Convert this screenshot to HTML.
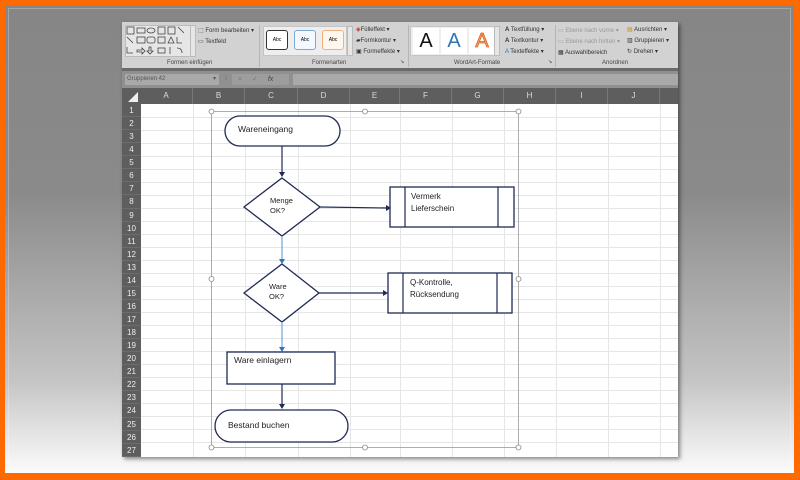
<!DOCTYPE html>
<html><head><meta charset="utf-8"><style>
*{margin:0;padding:0;box-sizing:border-box}
body{width:800px;height:480px;overflow:hidden;position:relative;font-family:"Liberation Sans",sans-serif;background:#ff6a00}
#bg{position:absolute;left:5px;top:5px;width:789px;height:468px;background:linear-gradient(#868686 0%,#8a8a8a 40%,#c4c4c4 80%,#fbfbfb 100%);}
#bg:after{content:"";position:absolute;left:3px;top:3px;right:3px;bottom:3px;border:1px solid rgba(255,255,255,.25)}
#win{position:absolute;left:122px;top:22px;width:556px;height:435px;background:#fff;box-shadow:2px 2px 4px rgba(0,0,0,.45);overflow:hidden}
#ribbon{position:absolute;left:0;top:0;width:556px;height:46px;background:#d2d2d2}
.lbl{position:absolute;top:38px;font-size:6px;color:#444}
.t{position:absolute;font-size:6px;color:#333;white-space:nowrap}
.sep{position:absolute;top:3px;width:1px;height:42px;background:#b5b5b5}
#dk{position:absolute;left:0;top:46px;width:556px;height:3px;background:#6a6a6a}
#fb{position:absolute;left:0;top:49px;width:556px;height:17px;background:#909090}
#hdr{position:absolute;left:0;top:66px;width:556px;height:16px;background:#5e5e5e}
#rh{position:absolute;left:0;top:82px;width:19px;height:353px;background:#5e5e5e}
.ch{position:absolute;top:66px;height:16px;line-height:16px;text-align:center;color:#ddd;font-size:8px;border-right:1px solid #777}
.rn{width:19px;height:13.07px;text-align:center;color:#eee;font-size:8px;line-height:13px;border-bottom:1px solid #6c6c6c}
</style></head><body>
<div id="bg"></div>
<div id="win">
 <div id="ribbon">
  <div style="position:absolute;left:3px;top:3px;width:66px;height:32px;background:#e6e6e6;border:1px solid #bbb"></div>
  <svg style="position:absolute;left:4px;top:4px" width="64" height="30" fill="none" stroke="#444" stroke-width=".8">
   <rect x="1" y="1" width="7" height="7"/><rect x="11" y="2" width="8" height="5"/><ellipse cx="25" cy="4.5" rx="4" ry="2.5"/><rect x="32" y="1" width="7" height="7"/><rect x="42" y="1" width="7" height="7"/><path d="M52 1l6 6"/>
   <path d="M1 11l6 6"/><rect x="11" y="11" width="8" height="6"/><rect x="21" y="11" width="8" height="6" rx="2"/><rect x="32" y="11" width="7" height="6"/><path d="M42 17l3-6 3 6z"/><path d="M51 11v6h5"/>
   <path d="M1 21v6h6"/><path d="M11 24h5v-2l3 3-3 3v-2h-5z"/><path d="M23 21v4h-2l3 3 3-3h-2v-4z"/><rect x="32" y="22" width="7" height="5"/><path d="M44 21v7"/><path d="M51 22q5 0 5 5"/>
  </svg>
  <div style="position:absolute;left:68px;top:3px;width:6px;height:32px;background:#e6e6e6;border:1px solid #bbb"></div>
  <div class="t" style="left:76px;top:5px">⬚ Form bearbeiten ▾</div>
  <div class="t" style="left:76px;top:16px">▭ Textfeld</div>
  <div class="lbl" style="left:45px">Formen einfügen</div>
  <div class="sep" style="left:137px"></div>
  <div style="position:absolute;left:141px;top:4px;width:84px;height:30px;background:#eee;border:1px solid #c5c5c5"></div>
  <div style="position:absolute;left:144px;top:8px;width:22px;height:20px;border:1.3px solid #333;border-radius:3px;background:#fff;font-size:5px;text-align:center;line-height:18px">Abc</div>
  <div style="position:absolute;left:172px;top:8px;width:22px;height:20px;border:1px solid #7aa9d1;border-radius:3px;background:#f4f9ff;font-size:5px;text-align:center;line-height:18px">Abc</div>
  <div style="position:absolute;left:200px;top:8px;width:22px;height:20px;border:1px solid #f0b080;border-radius:3px;background:#fff6ee;font-size:5px;text-align:center;line-height:18px">Abc</div>
  <div style="position:absolute;left:225px;top:4px;width:6px;height:30px;background:#e6e6e6;border:1px solid #bbb"></div>
  <div class="t" style="left:234px;top:4px"><span style="color:#c55">◆</span>Fülleffekt ▾</div>
  <div class="t" style="left:234px;top:15px"><span style="color:#335">▰</span>Formkontur ▾</div>
  <div class="t" style="left:234px;top:26px">▣ Formeffekte ▾</div>
  <div class="lbl" style="left:190px">Formenarten</div>
  <div class="t" style="left:278px;top:37px;font-size:5px">↘</div>
  <div class="sep" style="left:286px"></div>
  <div style="position:absolute;left:288px;top:4px;width:90px;height:30px;background:#eee;border:1px solid #c5c5c5"></div>
  <div style="position:absolute;left:291px;top:6px;width:26px;height:26px;background:#fff;font-size:20px;text-align:center;line-height:26px;color:#111">A</div>
  <div style="position:absolute;left:319px;top:6px;width:26px;height:26px;background:#fff;font-size:20px;text-align:center;line-height:26px;color:#2e75b6">A</div>
  <div style="position:absolute;left:347px;top:6px;width:26px;height:26px;background:#fff;font-size:20px;text-align:center;line-height:26px;color:#f4a460;-webkit-text-stroke:.8px #e06020">A</div>
  <div style="position:absolute;left:372px;top:4px;width:6px;height:30px;background:#e6e6e6;border:1px solid #bbb"></div>
  <div class="t" style="left:383px;top:4px"><b>A</b> Textfüllung ▾</div>
  <div class="t" style="left:383px;top:15px"><b>A</b> Textkontur ▾</div>
  <div class="t" style="left:383px;top:26px"><span style="color:#2e75b6">A</span> Texteffekte ▾</div>
  <div class="lbl" style="left:332px">WordArt-Formate</div>
  <div class="t" style="left:426px;top:37px;font-size:5px">↘</div>
  <div class="sep" style="left:433px"></div>
  <div class="t" style="left:436px;top:5px;color:#999">▭ Ebene nach vorne ▾</div>
  <div class="t" style="left:436px;top:16px;color:#999">▭ Ebene nach hinten ▾</div>
  <div class="t" style="left:436px;top:27px">▦ Auswahlbereich</div>
  <div class="t" style="left:505px;top:4px"><span style="color:#c80">▤</span> Ausrichten ▾</div>
  <div class="t" style="left:505px;top:15px">▥ Gruppieren ▾</div>
  <div class="t" style="left:505px;top:26px">↻ Drehen ▾</div>
  <div class="lbl" style="left:480px">Anordnen</div>
 </div>
 <div id="dk"></div>
 <div id="fb">
  <div style="position:absolute;left:3px;top:3px;width:94px;height:11px;background:#a9a9a9;font-size:6px;color:#555;line-height:11px;padding-left:2px">Gruppieren 42<span style="position:absolute;right:3px">▾</span></div>
  <div style="position:absolute;left:103px;top:3px;font-size:7px;color:#666">⁝</div>
  <div style="position:absolute;left:110px;top:3px;width:57px;height:11px;background:#9d9d9d;font-size:7px;color:#777;line-height:11px;padding-left:6px;word-spacing:8px">× ✓ <i style="color:#444">fx</i></div>
  <div style="position:absolute;left:171px;top:3px;width:385px;height:11px;background:#a9a9a9"></div>
 </div>
 <div id="hdr"></div>
 <svg style="position:absolute;left:6px;top:70px" width="10" height="10"><path d="M0 10L10 0V10z" fill="#eee"/></svg>
 <div class="ch" style="left:18px;width:53px">A</div>
 <div class="ch" style="left:71px;width:52px">B</div>
 <div class="ch" style="left:123px;width:53px">C</div>
 <div class="ch" style="left:176px;width:52px">D</div>
 <div class="ch" style="left:228px;width:50px">E</div>
 <div class="ch" style="left:278px;width:52px">F</div>
 <div class="ch" style="left:330px;width:52px">G</div>
 <div class="ch" style="left:382px;width:52px">H</div>
 <div class="ch" style="left:434px;width:52px">I</div>
 <div class="ch" style="left:486px;width:52px">J</div>
 <div id="rh"></div>
 <svg style="position:absolute;left:19px;top:82px" width="537" height="353">
  <g stroke="#e6e6e6" stroke-width="1">
   <path d="M52.5 0V353M104.5 0V353M157.5 0V353M209.5 0V353M259.5 0V353M311.5 0V353M363.5 0V353M415.5 0V353M467.5 0V353M519.5 0V353"/>
   <path d="M0 13.5H537M0 26.5H537M0 39.5H537M0 52.5H537M0 65.5H537M0 78.5H537M0 91.5H537M0 104.5H537M0 117.5H537M0 130.5H537M0 143.5H537M0 156.5H537M0 169.5H537M0 182.5H537M0 195.5H537M0 208.5H537M0 221.5H537M0 234.5H537M0 247.5H537M0 260.5H537M0 273.5H537M0 286.5H537M0 299.5H537M0 312.5H537M0 325.5H537M0 338.5H537"/>
  </g>
 </svg>
 <div style="position:absolute;left:0;top:82px;width:19px">
  <div class="rn">1</div><div class="rn">2</div><div class="rn">3</div><div class="rn">4</div><div class="rn">5</div><div class="rn">6</div><div class="rn">7</div><div class="rn">8</div><div class="rn">9</div><div class="rn">10</div><div class="rn">11</div><div class="rn">12</div><div class="rn">13</div><div class="rn">14</div><div class="rn">15</div><div class="rn">16</div><div class="rn">17</div><div class="rn">18</div><div class="rn">19</div><div class="rn">20</div><div class="rn">21</div><div class="rn">22</div><div class="rn">23</div><div class="rn">24</div><div class="rn">25</div><div class="rn">26</div><div class="rn">27</div>
 </div>
 <svg style="position:absolute;left:0;top:0" width="556" height="435" fill="none">
  <rect x="89.5" y="89.5" width="307" height="336" stroke="#9a9a9a" stroke-width=".8"/>
  <g fill="#fff" stroke="#888" stroke-width=".8">
   <circle cx="89.5" cy="89.5" r="2.5"/><circle cx="243" cy="89.5" r="2.5"/><circle cx="396.5" cy="89.5" r="2.5"/>
   <circle cx="89.5" cy="257" r="2.5"/><circle cx="396.5" cy="257" r="2.5"/>
   <circle cx="89.5" cy="425.5" r="2.5"/><circle cx="243" cy="425.5" r="2.5"/><circle cx="396.5" cy="425.5" r="2.5"/>
  </g>
  <g stroke="#1f2a55" stroke-width="1.3" fill="#fff">
   <rect x="103" y="94" width="115" height="30" rx="15"/>
   <path d="M160 156L198 185L160 214L122 185Z"/>
   <rect x="268" y="165" width="124" height="40"/>
   <path d="M160 242L197 271L160 300L122 271Z"/>
   <rect x="266" y="251" width="124" height="40"/>
   <rect x="105" y="330" width="108" height="32"/>
   <rect x="93" y="388" width="133" height="32" rx="16"/>
  </g>
  <g stroke="#1f2a55" stroke-width="1.2">
   <path d="M283 165V205M376 165V205M281 251V291M375 251V291"/>
   <path d="M160 124V151"/><path d="M198 185L265 186"/><path d="M197 271L262 271"/><path d="M160 362V383"/>
  </g>
  <g stroke="#6fa8dc" stroke-width="1.2"><path d="M160 214V238M160 300V326"/></g>
  <g fill="#1f2a55">
   <path d="M157 150h6l-3 5z"/><path d="M264 183v6l5-3z"/><path d="M261 268v6l5-3z"/><path d="M157 382h6l-3 5z"/>
  </g>
  <g fill="#2e75b6"><path d="M157 237h6l-3 5z"/><path d="M157 325h6l-3 5z"/></g>
 </svg>
 <div style="position:absolute;left:116px;top:102px;font-size:8.5px;color:#222">Wareneingang</div>
 <div style="position:absolute;left:148px;top:174px;font-size:7.5px;color:#222;line-height:10px">Menge<br>OK?</div>
 <div style="position:absolute;left:147px;top:260px;font-size:7.5px;color:#222;line-height:10px">Ware<br>OK?</div>
 <div style="position:absolute;left:289px;top:169px;font-size:8px;color:#222;line-height:12px">Vermerk<br>Lieferschein</div>
 <div style="position:absolute;left:288px;top:255px;font-size:8px;color:#222;line-height:12px">Q-Kontrolle,<br>Rücksendung</div>
 <div style="position:absolute;left:112px;top:333px;font-size:8.5px;color:#222">Ware einlagern</div>
 <div style="position:absolute;left:106px;top:398px;font-size:8.5px;color:#222">Bestand buchen</div>
</div>
</body></html>
